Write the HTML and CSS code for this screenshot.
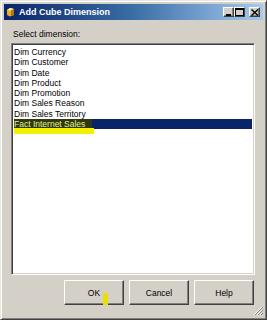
FILE: index.html
```html
<!DOCTYPE html>
<html>
<head>
<meta charset="utf-8">
<link rel="stylesheet" href="styles.css">
</head>
<body>
<div class="window">
  <div class="titlebar">
    <svg class="app-icon" width="9" height="10" viewBox="0 0 9 10">
      <path d="M1 3 L4 1 L8 2 L8 8 L4 9.5 L1 8 Z" fill="#e8b020"/>
      <path d="M1 3 L4 1 L8 2 L5 3.5 Z" fill="#fff4b0"/>
      <path d="M5 3.5 L8 2 L8 8 L5 9.3 Z" fill="#b07810"/>
    </svg>
    <span class="title">Add Cube Dimension</span>
    <div class="caption-buttons">
      <span class="cap-btn"><svg width="8" height="7" viewBox="0 0 8 7"><rect x="1" y="5" width="5" height="2" fill="#000"/></svg></span>
      <span class="cap-btn"><svg width="9" height="8" viewBox="0 0 9 8"><rect x="0.5" y="0.5" width="8" height="7" fill="none" stroke="#000"/><rect x="0" y="0" width="9" height="2" fill="#000"/></svg></span>
      <span class="cap-btn close"><svg width="8" height="7" viewBox="0 0 8 7"><path d="M0.5 0.5 L7 6.5 M7 0.5 L0.5 6.5" stroke="#000" stroke-width="1.4"/></svg></span>
    </div>
  </div>
  <div class="content">
    <div class="label">Select dimension:</div>
    <div class="listbox">
      <div class="item">Dim Currency</div>
      <div class="item">Dim Customer</div>
      <div class="item">Dim Date</div>
      <div class="item">Dim Product</div>
      <div class="item">Dim Promotion</div>
      <div class="item">Dim Sales Reason</div>
      <div class="item">Dim Sales Territory</div>
      <div class="item selected"><span class="marked">Fact Internet Sales</span><span class="marker-under"></span></div>
    </div>
  </div>
  <div class="buttons">
    <button class="btn ok">OK<span class="marker-ok"></span></button>
    <button class="btn">Cancel</button>
    <button class="btn">Help</button>
    <svg class="grip" width="10" height="10" viewBox="0 0 10 10">
      <path d="M9 1 L1 9 M9 4 L4 9 M9 7 L7 9" stroke="#fff" stroke-width="1"/>
      <path d="M10 1 L2 9 M10 4 L5 9 M10 7 L8 9" stroke="#808080" stroke-width="1"/>
    </svg>
  </div>
</div>
</body>
</html>
```

FILE: styles.css
```css
html, body {
  margin: 0;
  padding: 0;
  background: #d4d0c8;
}
.window {
  position: relative;
  width: 267px;
  height: 320px;
  box-sizing: border-box;
  background: #d4d0c8;
  border: 1px solid;
  border-color: #e8e6e0 #404040 #404040 #e8e6e0;
  box-shadow: inset 1px 1px #ffffff, inset -1px -1px #808080;
  padding: 3px;
  display: flex;
  flex-direction: column;
  font-family: "Liberation Sans", Arial, sans-serif;
  font-size: 8.5px;
  color: #000;
}
.titlebar {
  height: 16px;
  background: linear-gradient(to right, #0a246a 0%, #3a6ea5 50%, #a6caf0 100%);
  display: flex;
  align-items: center;
  padding-left: 2px;
  flex-shrink: 0;
}
.app-icon {
  flex-shrink: 0;
  margin-right: 4px;
}
.title {
  color: #fff;
  font-weight: bold;
  font-size: 9px;
  flex: 1;
}
.caption-buttons {
  display: flex;
  align-items: center;
  padding-right: 3px;
}
.cap-btn {
  width: 11px;
  height: 10px;
  box-sizing: border-box;
  background: #d4d0c8;
  border: 1px solid;
  border-color: #fff #404040 #404040 #fff;
  box-shadow: inset -1px -1px #808080;
  display: flex;
  align-items: center;
  justify-content: center;
}
.cap-btn svg { display: block; }
.cap-btn.close { margin-left: 4px; }
.content {
  flex: 1;
  display: flex;
  flex-direction: column;
  padding: 8px 8px 0 7px;
  min-height: 0;
}
.label {
  line-height: 12px;
  padding-left: 2px;
  margin-bottom: 3px;
}
.listbox {
  flex: 1;
  background: #fff;
  border: 1px solid;
  border-color: #808080 #fff #fff #808080;
  box-shadow: inset 1px 1px #404040, inset -1px -1px #d4d0c8;
  padding: 3px 2px 2px 2px;
  width: 244px;
  box-sizing: border-box;
}
.item {
  line-height: 10.25px;
  height: 10.25px;
  padding-left: 0;
  white-space: nowrap;
}
.item.selected {
  position: relative;
  background: #0a246a;
  color: #fff;
}
.marked {
  background: #2e3812;
  color: #e8f27a;
  display: inline-block;
  padding-right: 7px;
}
.marker-under {
  position: absolute;
  left: 0;
  top: 9px;
  width: 80px;
  height: 6px;
  background: #f4f000;
}
.buttons {
  display: flex;
  justify-content: flex-end;
  gap: 5px;
  padding: 5px 9px 11px 0;
  position: relative;
}
.btn {
  position: relative;
  width: 60px;
  height: 25px;
  box-sizing: border-box;
  background: #d4d0c8;
  border: 1px solid;
  border-color: #fff #404040 #404040 #fff;
  box-shadow: inset -1px -1px #808080;
  font-family: "Liberation Sans", Arial, sans-serif;
  font-size: 8.5px;
  color: #000;
  padding: 0;
}
.marker-ok {
  position: absolute;
  left: 38px;
  top: 12px;
  width: 5px;
  height: 12px;
  background: #e8e000;
}
.grip {
  position: absolute;
  right: 0;
  bottom: 0;
}
```
